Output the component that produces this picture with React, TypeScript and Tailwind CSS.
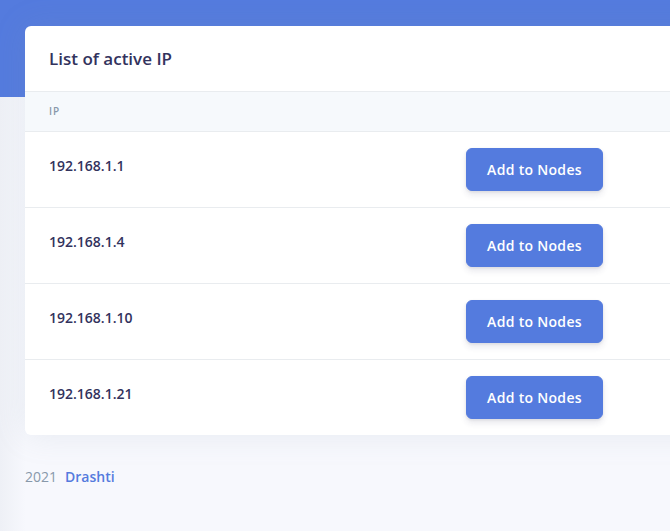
const ips = ["192.168.1.1", "192.168.1.4", "192.168.1.10", "192.168.1.21"];

function IpRow({ ip }: { ip: string }) {
  return (
    <div className="grid grid-cols-[441px_1fr] border-t border-[#e9ecef] h-[76px]">
      <div className="pl-6 pt-[23px] text-[14px] font-semibold text-[#32325d] leading-[21px]">
        {ip}
      </div>
      <div className="flex items-center">
        <button className="h-[43px] w-[137px] rounded-[6px] border border-[#547bde] bg-[#547bde] text-[14px] font-semibold leading-[21px] tracking-[0.3px] text-white shadow-[0_4px_6px_rgba(50,50,93,0.11),0_1px_3px_rgba(0,0,0,0.08)]">
          Add to Nodes
        </button>
      </div>
    </div>
  );
}

export default function App() {
  return (
    <div
      className="relative min-h-[531px] w-[670px] overflow-hidden bg-[#f7f8fd]"
      style={{ fontFamily: '"Open Sans", "Noto Sans", sans-serif' }}
    >
      <div className="h-[97px] bg-[#547bde]" />
      <div className="pointer-events-none absolute left-0 top-[97px] h-[434px] w-[26px] bg-gradient-to-r from-[#eef0f6] to-[#f7f8fd]" />
      <div className="relative -mt-[71px] ml-[25px]">
        <div className="w-[700px] rounded-[6px] bg-white shadow-[0_0_32px_rgba(136,152,170,0.15)]">
          <div className="flex h-[65px] items-center px-6">
            <h3 className="text-[17px] font-semibold text-[#32325d]">List of active IP</h3>
          </div>
          <div className="flex h-[40px] items-center border-t border-[#e9ecef] bg-[#f6f9fc] px-6">
            <span className="text-[10px] font-semibold uppercase tracking-[1px] text-[#8898aa]">IP</span>
          </div>
          {ips.map((ip) => (
            <IpRow key={ip} ip={ip} />
          ))}
        </div>
        <div className="mt-[31px] flex items-center gap-2 text-[14px]">
          <span className="text-[#8898aa]">2021</span>
          <span className="font-semibold text-[#547bde]">Drashti</span>
        </div>
      </div>
    </div>
  );
}
